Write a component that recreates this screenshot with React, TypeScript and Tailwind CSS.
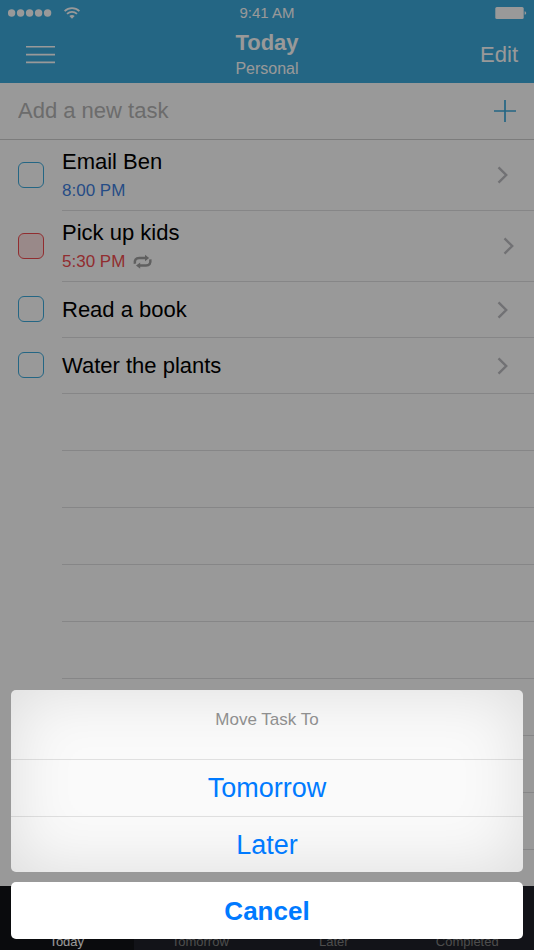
import React, { useState } from 'react';

type Task = {
  id: number;
  title: string;
  time?: string;
  overdue?: boolean;
  repeat?: boolean;
};

const tasks: Task[] = [
  { id: 1, title: 'Email Ben', time: '8:00 PM' },
  { id: 2, title: 'Pick up kids', time: '5:30 PM', overdue: true, repeat: true },
  { id: 3, title: 'Read a book' },
  { id: 4, title: 'Water the plants' },
];

const tabs = ['Today', 'Tomorrow', 'Later', 'Completed'];
const emptyRows = Array.from({ length: 8 }, (_, i) => i);

const StatusBar: React.FC = () => (
  <div className="relative flex h-7 items-center justify-between pb-0.5 pl-2 pr-[7px]">
    <div className="flex items-center gap-3">
      <svg width="44" height="8" viewBox="0 0 44 8" fill="currentColor" aria-hidden="true">
        <circle cx="3.6" cy="4" r="3.7" />
        <circle cx="12.6" cy="4" r="3.7" />
        <circle cx="21.6" cy="4" r="3.7" />
        <circle cx="30.6" cy="4" r="3.7" />
        <circle cx="39.6" cy="4" r="3.7" />
      </svg>
      <svg width="16" height="12" viewBox="0 0 16 12" fill="none" stroke="currentColor" aria-hidden="true">
        <path d="M0.6 4.2C4.8 0.1 11.2 0.1 15.4 4.2" strokeWidth="1.8" />
        <path d="M3 6.9C5.9 4.2 10.1 4.2 13 6.9" strokeWidth="1.8" />
        <path d="M8 11.8 5.3 9C6.8 7.6 9.2 7.6 10.7 9Z" fill="currentColor" stroke="none" />
      </svg>
    </div>
    <span className="absolute inset-x-0 text-center text-[15px] leading-5">9:41 AM</span>
    <svg width="32" height="14" viewBox="0 0 32 14" fill="currentColor" aria-hidden="true">
      <rect x="0.3" y="1" width="28.4" height="12" rx="1.5" />
      <path d="M29.6 5.2C31.7 5.6 31.7 8.4 29.6 8.8Z" />
    </svg>
  </div>
);

const Header: React.FC = () => (
  <header className="bg-[#3caadc] text-white">
    <StatusBar />
    <div className="grid h-[55px] grid-cols-[1fr_auto_1fr] items-center">
      <button type="button" aria-label="Menu" className="ml-6 justify-self-start p-0.5 pb-1">
        <svg width="29" height="20" viewBox="0 0 29 20" stroke="currentColor" strokeWidth="1.6" aria-hidden="true">
          <path d="M0 1.8H29M0 9.6H29M0 17.4H29" />
        </svg>
      </button>
      <div className="pb-0.5 text-center">
        <h1 className="text-[22px] font-bold leading-7">Today</h1>
        <p className="text-base leading-6">Personal</p>
      </div>
      <button type="button" className="mr-4 justify-self-end pb-0.5 text-[22px] leading-7">
        Edit
      </button>
    </div>
  </header>
);

const RepeatIcon: React.FC = () => (
  <svg width="20" height="16" viewBox="0 0 20 16" fill="none" stroke="#a0a0a0" strokeWidth="2.5" aria-hidden="true">
    <path d="M1.9 9.8C1.3 6 2.8 4 6.2 4H13" />
    <path d="M12 0.8 16.2 4 12 7.2Z" fill="#a0a0a0" stroke="none" />
    <path d="M17.3 5.4C17.9 9.4 16.4 11.6 13 11.6H6.4" />
    <path d="M7.2 8.4 3 11.6 7.2 14.8Z" fill="#a0a0a0" stroke="none" />
  </svg>
);

const Chevron: React.FC = () => (
  <svg width="11" height="18" viewBox="0 0 11 18" fill="none" stroke="#bdbdc1" strokeWidth="2.4" aria-hidden="true">
    <path d="M1.5 1.4 9.2 9 1.5 16.6" />
  </svg>
);

const TaskRow: React.FC<{ task: Task }> = ({ task }) => {
  const [done, setDone] = useState(false);
  const inputId = `task-${task.id}`;

  return (
    <li className={task.time ? 'flex h-[71px] shrink-0 pl-[18px]' : 'flex min-h-12 grow basis-0 pl-[18px]'}>
      <input
        id={inputId}
        type="checkbox"
        checked={done}
        onChange={() => setDone(!done)}
        className={
          task.overdue
            ? 'mb-0.5 mr-[18px] size-[26px] shrink-0 appearance-none self-center rounded-md border border-[#f24c50] bg-[#ffe4e4] checked:bg-[#f24c50]'
            : 'mb-0.5 mr-[18px] size-[26px] shrink-0 appearance-none self-center rounded-md border border-[#3caadc] checked:bg-[#3caadc]'
        }
      />
      <div
        className={
          task.overdue
            ? 'flex flex-1 items-center justify-between border-b border-[#e0e0e2] pr-5'
            : 'flex flex-1 items-center justify-between border-b border-[#e0e0e2] pr-[26px]'
        }
      >
        <div className={task.time ? 'self-start pt-2' : ''}>
          <label htmlFor={inputId} className="block text-[22px] leading-7 text-black">
            {task.title}
          </label>
          {task.time && (
            <div
              className={
                task.overdue
                  ? 'flex items-center gap-2 text-[17px] leading-[30px] text-[#f24c50]'
                  : 'text-[17px] leading-[30px] text-[#3f7fe0]'
              }
            >
              <span>{task.time}</span>
              {task.repeat && <RepeatIcon />}
            </div>
          )}
        </div>
        <Chevron />
      </div>
    </li>
  );
};

const ActionSheet: React.FC = () => (
  <div role="dialog" aria-label="Move Task To" className="absolute inset-x-0 bottom-0 px-[11px] pb-[11px] text-[#007aff]">
    <div className="overflow-hidden rounded-[5px] bg-[#fafafa] shadow-[inset_0_0_64px_rgba(0,0,0,0.12)]">
      <p className="h-[69px] pt-4 text-center text-[17px] leading-7 text-[#8f8f8f]">Move Task To</p>
      <button type="button" className="block h-[57px] w-full border-t border-black/10 text-[27px] leading-8">
        Tomorrow
      </button>
      <button type="button" className="block h-14 w-full border-t border-black/10 text-[27px] leading-8">
        Later
      </button>
    </div>
    <button type="button" className="mt-2.5 block h-[57px] w-full rounded-[5px] bg-white text-[26px] font-bold leading-8">
      Cancel
    </button>
  </div>
);

export default function App() {
  return (
    <div className="relative flex min-h-screen flex-col overflow-hidden bg-white font-['Helvetica_Neue','Liberation_Sans',Arial,sans-serif]">
      <Header />

      <form
        className="flex h-[57px] items-center border-b border-[#cfcfcf] pl-[18px] pr-[18px]"
        onSubmit={(e) => e.preventDefault()}
      >
        <input
          type="text"
          aria-label="Add a new task"
          placeholder="Add a new task"
          className="min-w-0 flex-1 bg-transparent text-[22px] leading-7 placeholder:text-[#b4b4b4] focus:outline-none"
        />
        <button type="submit" aria-label="Add">
          <svg width="22" height="22" viewBox="0 0 22 22" stroke="#3caadc" strokeWidth="1.7" aria-hidden="true">
            <path d="M11 0V22M0 11H22" />
          </svg>
        </button>
      </form>

      <ul className="flex flex-1 flex-col pb-9">
        {tasks.map((task) => (
          <TaskRow key={task.id} task={task} />
        ))}
        {emptyRows.map((row) => (
          <li key={row} className="ml-[62px] min-h-12 grow basis-0 border-b border-[#e0e0e2]" />
        ))}
      </ul>

      <nav className="grid h-16 grid-cols-4 bg-[#1f2028] text-[13px] leading-4">
        {tabs.map((tab, idx) => (
          <a
            key={tab}
            href="#"
            className={
              idx === 0
                ? 'flex items-end justify-center bg-[#111316] text-white'
                : 'flex items-end justify-center text-[#808080]'
            }
          >
            {tab}
          </a>
        ))}
      </nav>

      {/* Dimmed backdrop behind the sheet */}
      <div className="absolute inset-0 bg-black/40" />
      <ActionSheet />
    </div>
  );
}
